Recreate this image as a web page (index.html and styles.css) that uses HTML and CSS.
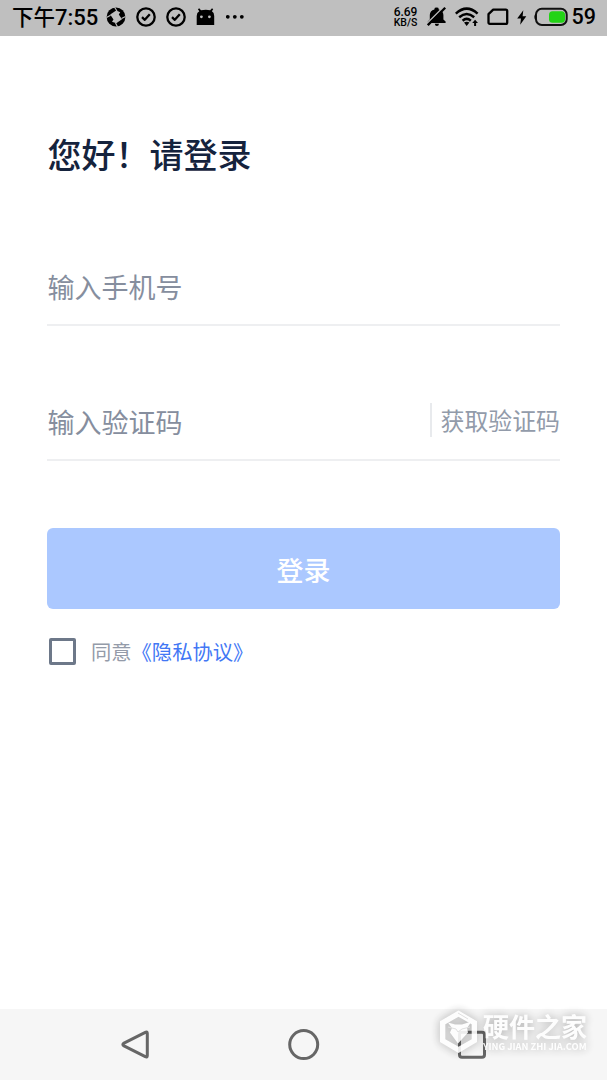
FILE: index.html
```html
<!DOCTYPE html>
<html lang="zh-CN">
<head>
<meta charset="utf-8">
<title>登录</title>
<link rel="stylesheet" href="styles.css">
</head>
<body>
<div class="screen">
  <header class="status">
    <div class="status-left">
      <span class="time"><span class="ampm">下午</span>7:55</span>
      <svg class="ico" width="20" height="20" viewBox="0 0 20 20"><circle cx="10" cy="10" r="9.4"/><path class="cut" d="M4.2 7.6 10.2 3.6 14.2 5.3 12.8 7.6 16 12.2 10.3 16.2 6 14.8 7.5 12.5Z"/><path class="cutline" d="M11 4 8.5.2M4.6 8.2.5 10.5M15.6 11.5 19.5 9.5M9.5 16 11.5 19.8"/></svg>
      <svg class="ico" width="20" height="20" viewBox="0 0 20 20"><circle class="line" cx="10" cy="10" r="8.7"/><path class="line" d="m6 10.2 2.8 2.6 5-5.5"/></svg>
      <svg class="ico" width="20" height="20" viewBox="0 0 20 20"><circle class="line" cx="10" cy="10" r="8.7"/><path class="line" d="m6 10.2 2.8 2.6 5-5.5"/></svg>
      <svg class="ico" width="20" height="20" viewBox="0 0 20 20"><path d="M.7 18V9Q.7 5.6 3.3 4.3L1.9 2.2 3.2 1.2 5 3.3Q10 2 14.2 3.3L16 1.2 17.2 2.2 15.9 4.3Q18.2 5.6 18.2 9V18Z"/><circle class="cut" cx="5.4" cy="9.8" r="1.4"/><circle class="cut" cx="13.4" cy="9.8" r="1.4"/></svg>
      <svg class="ico" width="20" height="20" viewBox="0 0 20 20"><circle cx="1.8" cy="9.8" r="1.9"/><circle cx="8.8" cy="9.8" r="1.9"/><circle cx="15.8" cy="9.8" r="1.9"/></svg>
    </div>
    <div class="status-right">
      <span class="speed"><b>6.69</b><b>KB/S</b></span>
      <svg class="bell" width="20" height="20" viewBox="0 0 20 20"><path d="M.8 16V14.5L2.8 12.5V8Q2.8 3.8 7.4 2.4V2Q7.4.6 9.6.6T11.7 2V2.4Q16.4 3.8 16.4 8V12.5L18.6 14.5V16ZM7.8 16.8H12Q11.8 19 9.9 19T7.8 16.8Z"/><path class="slash-gap" d="M0 16.6 16.6 0"/><path class="line" d="M.8 18.2 18.2.8"/></svg>
      <svg class="wifi" width="25" height="20" viewBox="0 0 25 20"><path class="wave" d="M.8 6.6Q11.7 -3.4 22.6 6.6M4.2 10.3Q11.7 3.8 19.2 10.3M7.6 13.7Q11.7 10 15.8 13.7"/><path d="M9 15.6Q11.7 14 14.4 15.6L11.7 19ZM20.1 12.8 23 15.9H21.1V19H19.1V15.9H17.2Z"/></svg>
      <svg class="sim" width="22" height="18" viewBox="0 0 22 18"><path class="line" d="M6.2 1.7H18.8Q20.2 1.7 20.2 3.1V14.4Q20.2 15.8 18.8 15.8H2.9Q1.5 15.8 1.5 14.4V6.2Z"/></svg>
      <svg class="bolt" width="10" height="17" viewBox="0 0 10 17"><path d="M6.3 1.2.2 9.4H4L3.2 15.8 9.3 7.3H5.6Z"/></svg>
      <svg class="battery" width="35" height="20" viewBox="0 0 35 20"><rect class="case" x="2" y="1.8" width="30.7" height="16.2" rx="5.8"/><path d="M1.5 6.5Q-.8 10 1.5 13.5Z"/><rect class="charge" x="15" y="4.3" width="16" height="11.5" rx="3.5"/></svg>
      <span class="level">59</span>
    </div>
  </header>

  <main class="login">
    <h1 class="title">您好！请登录</h1>
    <div class="field phone">输入手机号</div>
    <div class="field code"><span>输入验证码</span><span class="get-code">获取验证码</span></div>
    <button class="submit">登录</button>
    <label class="agree"><span class="box"></span><span>同意<a class="policy">《隐私协议》</a></span></label>
  </main>

  <nav class="nav">
    <svg class="nav-ico" width="36" height="36" viewBox="0 0 36 36"><path d="M28.3 5.3Q30.3 4.3 30.3 6.5V28.5Q30.3 30.7 28.3 29.7L7 18.9Q4.7 17.5 7 16.1Z"/></svg>
    <svg class="nav-ico" width="36" height="36" viewBox="0 0 36 36"><circle cx="17.7" cy="17.6" r="14"/></svg>
    <svg class="nav-ico" width="36" height="36" viewBox="0 0 36 36"><rect x="5.5" y="5.3" width="25" height="25" rx="2.5"/></svg>
    <div class="watermark">
      <svg width="42" height="46" viewBox="0 0 42 46"><path class="hex" fill-rule="evenodd" d="M19.5 1.5 38 12.3V33L19.5 44 1 33V12.3ZM19.5 7.8 6.3 15.3V30.2L19.5 37.8 32.7 30.2V15.3Z"/><path class="hex" d="M9 13.5 16 15.5H23L32.5 12.5 28 19 29 23.5 19 34.5 11 23.5 13 19Z"/><path class="crack" d="m9 18 8 2 2 3 4-3 8-2M19 4l10 6"/></svg>
      <div class="brand"><span class="brand-name">硬件之家</span><span class="brand-url">YING JIAN ZHI JIA.COM</span></div>
    </div>
  </nav>
</div>
</body>
</html>
```
FILE: styles.css
```css
* { box-sizing: border-box; }
body { margin: 0; background: #fff; font-family: "Noto Sans CJK SC", sans-serif; }
.screen { width: 607px; height: 1080px; display: flex; flex-direction: column; overflow: hidden; }
svg { display: block; flex: none; }

.status { height: 36px; flex: none; background: #bfbfbf; color: #000; display: flex; justify-content: space-between; align-items: center; padding: 0 11px 2px 12px; }
.status-left, .status-right { display: flex; align-items: center; }
.status-left { gap: 10px; }
.time { width: 84px; padding-top: 1px; white-space: nowrap; font: 500 22px/30px Roboto, "Noto Sans CJK SC", sans-serif; }
.ampm { font-size: 21.5px; font-weight: 500; }
.line { fill: none; stroke: #000; stroke-width: 2.3; stroke-linejoin: round; }
.cut { fill: #bfbfbf; }
.cutline { fill: none; stroke: #bfbfbf; stroke-width: 1.1; }
.speed { display: flex; flex-direction: column; align-items: center; width: 26px; font: 500 10.5px/9px Roboto, sans-serif; }
.speed b { font-weight: 500; }
.speed b:first-child { font-size: 12px; line-height: 11px; }
.slash-gap { stroke: #bfbfbf; stroke-width: 1.6; }
.bell { margin-left: 8px; }
.wifi { margin-left: 8px; }
.wave { fill: none; stroke: #000; stroke-width: 2.5; }
.sim { margin-left: 7px; }
.bolt { margin-left: 8px; }
.battery { margin-left: 7px; }
.case { fill: none; stroke: #111; stroke-width: 2; }
.charge { fill: #22d315; }
.level { margin-left: 3px; font: 500 21.5px/30px Roboto, sans-serif; }

.login { flex: 1; padding: 93px 47px 0; }
.title { margin: 0 0 0 .5px; height: 50px; font-size: 34px; line-height: 50px; font-weight: 500; color: #15233d; }
.field { display: flex; justify-content: space-between; align-items: flex-start; border-bottom: 2px solid #eeeff1; padding-left: .5px; font-size: 27px; line-height: 40px; color: #868e9e; }
.phone { margin-top: 71px; height: 76px; padding-top: 17px; }
.code { margin-top: 59px; height: 76px; padding-top: 17px; }
.get-code { height: 34px; border-left: 2px solid #e8eaed; padding-left: 9px; font-size: 23.9px; line-height: 34px; margin-top: 1px; color: #929baa; }
.submit { display: block; width: 513px; height: 81px; margin-top: 67px; padding: 2px 0 0; border: 0; border-radius: 6px; background: #abc8ff; color: #fff; font: 500 27px/40px "Noto Sans CJK SC", sans-serif; }
.agree { display: flex; align-items: center; margin: 26px 0 0 2px; height: 32px; gap: 15px; font-size: 20.3px; line-height: 30px; color: #949ba9; }
.box { width: 27px; height: 27px; border: 3px solid #6d7889; border-radius: 2px; }
.policy { color: #4277f5; }

.nav { position: relative; height: 71px; flex: none; background: #f6f6f6; display: flex; justify-content: space-between; padding: 18px 117px 0 117px; }
.nav-ico { fill: none; stroke: #666; stroke-width: 3; stroke-linejoin: round; }
.watermark { position: absolute; left: 439px; top: 0; display: flex; filter: drop-shadow(0 0 5px rgba(0,0,0,.35)); opacity: .88; }
.hex { fill: #fff; }
.crack { fill: none; stroke: #ddd; stroke-width: 1; }
.brand { display: flex; flex-direction: column; padding: 1px 0 0 2px; color: #fff; white-space: nowrap; }
.brand-name { height: 30px; font-size: 26px; line-height: 31px; font-weight: 700; }
.brand-url { font-size: 9.3px; line-height: 13px; font-weight: 700; }
```
